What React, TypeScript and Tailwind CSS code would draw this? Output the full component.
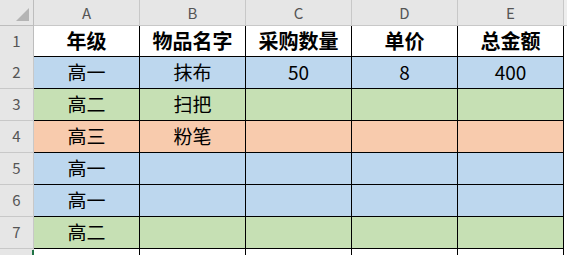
import React from 'react'

const cols = ['A', 'B', 'C', 'D', 'E']

const rows: { bg: string; cells: string[] }[] = [
  { bg: 'bg-[#bdd7ee]', cells: ['高一', '抹布', '50', '8', '400'] },
  { bg: 'bg-[#c6e0b4]', cells: ['高二', '扫把', '', '', ''] },
  { bg: 'bg-[#f8cbad]', cells: ['高三', '粉笔', '', '', ''] },
  { bg: 'bg-[#bdd7ee]', cells: ['高一', '', '', '', ''] },
  { bg: 'bg-[#bdd7ee]', cells: ['高一', '', '', '', ''] },
  { bg: 'bg-[#c6e0b4]', cells: ['高二', '', '', '', ''] },
]

const heads = ['年级', '物品名字', '采购数量', '单价', '总金额']

const grid = 'grid grid-cols-[34px_106px_106px_106px_106px_106px_1fr]'
const font = { fontFamily: '"Noto Sans CJK SC", "Liberation Sans", sans-serif' }

export default function App() {
  return (
    <div className="w-[567px] h-[255px] overflow-hidden bg-white" style={font}>
      {/* column letters */}
      <div className={`${grid} h-[26px] bg-[#e6e6e6]`}>
        <div className="relative border-r border-b border-[#bdbdbd]">
          <div className="absolute right-[4px] bottom-[4px] w-0 h-0 border-l-[13px] border-l-transparent border-b-[13px] border-b-[#b4b4b4]" />
        </div>
        {cols.map(c => (
          <div
            key={c}
            className="flex items-center justify-center border-r border-b border-[#c8c8c8] text-[15px] text-[#555] pt-[2px]"
          >
            {c}
          </div>
        ))}
        <div className="border-b border-[#c8c8c8] bg-[#eeeeee]" />
      </div>

      {/* row 1 */}
      <div className={`${grid} h-[31px]`}>
        <div className="flex items-center justify-center bg-[#e6e6e6] border-r border-[#bdbdbd] text-[15px] text-[#555]">1</div>
        {heads.map(h => (
          <div
            key={h}
            className="flex items-center justify-center border-r border-b border-black font-bold text-[20px] text-black"
          >
            {h}
          </div>
        ))}
        <div />
      </div>

      {rows.map((r, i) => (
        <div key={i} className={`${grid} h-[32px]`}>
          <div className="flex items-center justify-center bg-[#e6e6e6] border-r border-b border-[#c8c8c8] text-[15px] text-[#555]">
            {i + 2}
          </div>
          {r.cells.map((v, j) => (
            <div
              key={j}
              className={`flex items-center justify-center border-r border-b border-black text-[19px] text-black ${r.bg}`}
            >
              {v}
            </div>
          ))}
          <div />
        </div>
      ))}

      {/* row 8 (partly visible) */}
      <div className={`${grid} h-[8px]`}>
        <div className="relative bg-[#e6e6e6] border-r border-[#c8c8c8]">
          <div className="absolute right-[-1px] top-[1px] bottom-0 w-[2px] bg-[#217346]" />
        </div>
        {cols.map(c => (
          <div key={c} className="border-r border-black" />
        ))}
        <div />
      </div>
    </div>
  )
}
